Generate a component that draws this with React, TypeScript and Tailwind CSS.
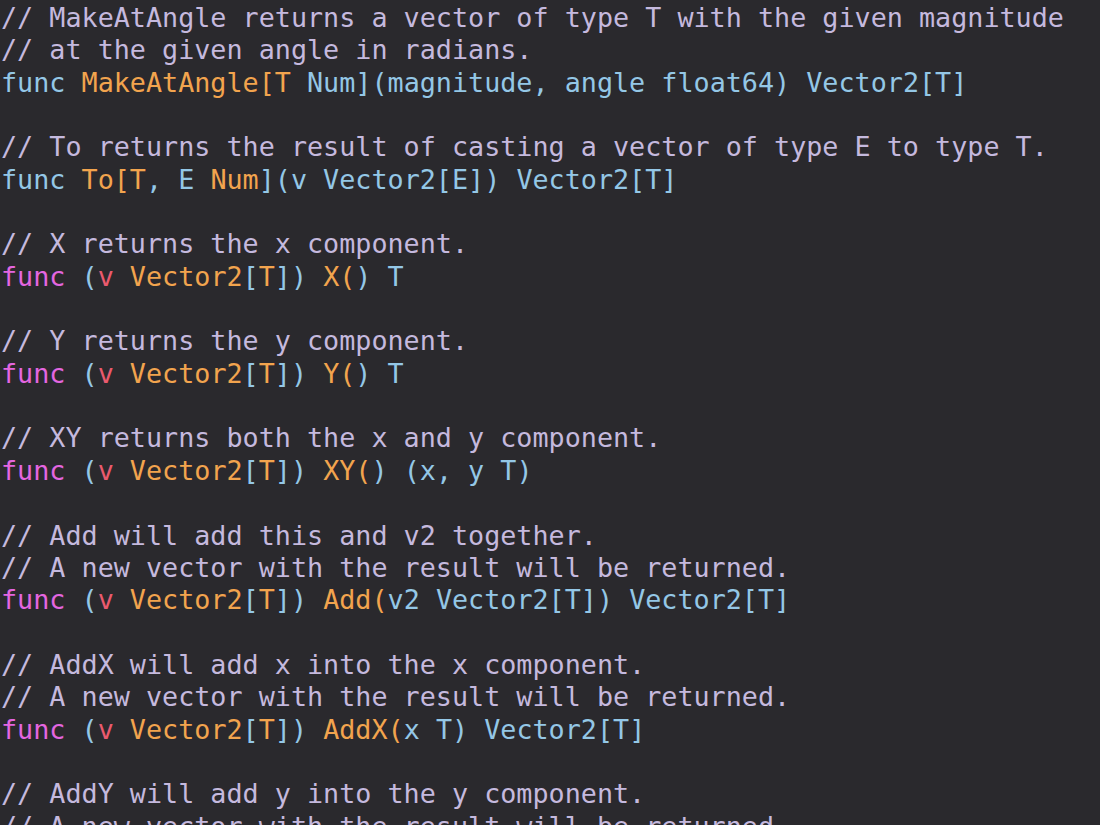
import React from "react";

type Seg = [string, string];

const C = "text-[#c5b9de]";
const B = "text-[#94c7e6]";
const M = "text-[#e466e0]";
const O = "text-[#f2a44e]";
const R = "text-[#ea5a6e]";

const recv: Seg[] = [
  [M, "func"],
  [B, " ("],
  [R, "v"],
  [B, " "],
  [O, "Vector2"],
  [B, "["],
  [O, "T"],
  [B, "]) "],
];

const lines: Seg[][] = [
  [[C, "// MakeAtAngle returns a vector of type T with the given magnitude"]],
  [[C, "// at the given angle in radians."]],
  [
    [B, "func "],
    [O, "MakeAtAngle[T"],
    [B, " Num](magnitude, angle float64) Vector2[T]"],
  ],
  [],
  [[C, "// To returns the result of casting a vector of type E to type T."]],
  [
    [B, "func "],
    [O, "To[T"],
    [B, ", E "],
    [O, "Num"],
    [B, "](v Vector2[E]) Vector2[T]"],
  ],
  [],
  [[C, "// X returns the x component."]],
  [...recv, [O, "X("], [B, ") T"]],
  [],
  [[C, "// Y returns the y component."]],
  [...recv, [O, "Y("], [B, ") T"]],
  [],
  [[C, "// XY returns both the x and y component."]],
  [...recv, [O, "XY("], [B, ") (x, y T)"]],
  [],
  [[C, "// Add will add this and v2 together."]],
  [[C, "// A new vector with the result will be returned."]],
  [...recv, [O, "Add("], [B, "v2 Vector2[T]) Vector2[T]"]],
  [],
  [[C, "// AddX will add x into the x component."]],
  [[C, "// A new vector with the result will be returned."]],
  [...recv, [O, "AddX("], [B, "x T) Vector2[T]"]],
  [],
  [[C, "// AddY will add y into the y component."]],
  [[C, "// A new vector with the result will be returned."]],
];

export default function App() {
  return (
    <div className="w-[1100px] h-[825px] overflow-hidden bg-[#2a292d]">
      <pre
        className="m-0 pl-[1px] pt-[2px] text-[26.75px] leading-[32.35px] whitespace-pre"
        style={{ fontFamily: '"DejaVu Sans Mono", "Liberation Mono", monospace' }}
      >
        {lines.map((segs, i) => (
          <div key={i} className="h-[32.35px]">
            {segs.length === 0
              ? " "
              : segs.map((s, j) => (
                  <span key={j} className={s[0]}>
                    {s[1]}
                  </span>
                ))}
          </div>
        ))}
      </pre>
    </div>
  );
}
